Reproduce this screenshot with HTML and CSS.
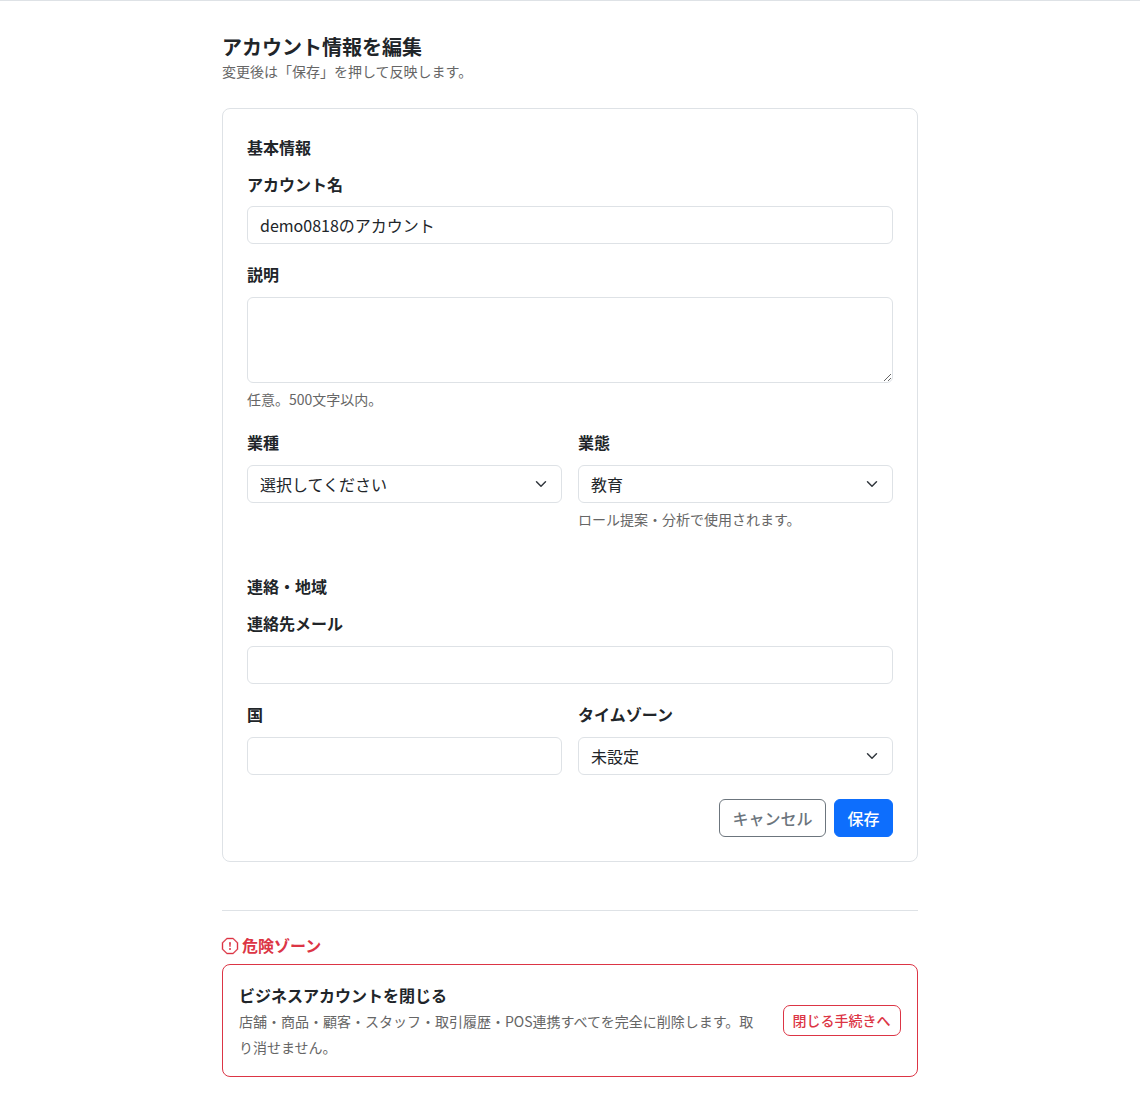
FILE: index.html
```html
<!DOCTYPE html>
<html lang="ja">
<head>
    <meta charset="UTF-8">
    <title>アカウント情報を編集</title>
    <link rel="stylesheet" href="styles.css">
</head>
<body>
    <main class="container">
        <h1 class="page-title">アカウント情報を編集</h1>
        <p class="page-sub">変更後は「保存」を押して反映します。</p>

        <form class="card">
            <h2 class="section-title">基本情報</h2>
            <div class="field">
                <label class="label label-tight" for="name">アカウント名</label>
                <input class="control" id="name" type="text" value="demo0818のアカウント">
            </div>
            <div class="field">
                <label class="label" for="desc">説明</label>
                <textarea class="control area" id="desc" rows="3"></textarea>
                <div class="help help-gap">任意。500文字以内。</div>
            </div>
            <div class="row">
                <div class="field">
                    <label class="label" for="industry">業種</label>
                    <select class="control select" id="industry">
                        <option>選択してください</option>
                    </select>
                </div>
                <div class="field">
                    <label class="label" for="format">業態</label>
                    <select class="control select" id="format">
                        <option>教育</option>
                    </select>
                    <div class="help">ロール提案・分析で使用されます。</div>
                </div>
            </div>

            <h2 class="section-title second">連絡・地域</h2>
            <div class="field">
                <label class="label" for="email">連絡先メール</label>
                <input class="control" id="email" type="email">
            </div>
            <div class="row">
                <div class="field">
                    <label class="label" for="country">国</label>
                    <input class="control" id="country" type="text">
                </div>
                <div class="field">
                    <label class="label" for="tz">タイムゾーン</label>
                    <select class="control select" id="tz">
                        <option>未設定</option>
                    </select>
                </div>
            </div>
            <div class="actions">
                <button class="btn btn-outline" type="button">キャンセル</button>
                <button class="btn btn-primary" type="submit">保存</button>
            </div>
        </form>

        <hr class="divider">

        <h2 class="danger-title">
            <svg class="danger-icon" width="16" height="16" viewBox="0 0 16 16" fill="currentColor" aria-hidden="true">
                <path stroke="currentColor" stroke-width="0.4" d="M4.54.146A.5.5 0 0 1 4.893 0h6.214a.5.5 0 0 1 .353.146l4.394 4.394a.5.5 0 0 1 .146.353v6.214a.5.5 0 0 1-.146.353l-4.394 4.394a.5.5 0 0 1-.353.146H4.893a.5.5 0 0 1-.353-.146L.146 11.46A.5.5 0 0 1 0 11.107V4.893a.5.5 0 0 1 .146-.353L4.54.146zM5.1 1 1 5.1v5.8L5.1 15h5.8l4.1-4.1V5.1L10.9 1H5.1z"/>
                <path d="M7.002 11a1 1 0 1 1 2 0 1 1 0 0 1-2 0zM7.1 4.995a.905.905 0 1 1 1.8 0l-.35 3.507a.552.552 0 0 1-1.1 0L7.1 4.995z"/>
            </svg>
            危険ゾーン
        </h2>
        <section class="danger-card">
            <div class="danger-text">
                <h3 class="danger-head">ビジネスアカウントを閉じる</h3>
                <p class="danger-desc">店舗・商品・顧客・スタッフ・取引履歴・POS連携すべてを完全に削除します。取り消せません。</p>
            </div>
            <a class="danger-btn" href="#">閉じる手続きへ</a>
        </section>
    </main>
</body>
</html>
```

FILE: styles.css
```css
* {
    box-sizing: border-box;
}
body {
    margin: 0;
    border-top: 1px solid #dee2e6;
    background-color: #fff;
    color: #212529;
    font-family: "Noto Sans CJK JP", "Noto Sans", sans-serif;
    font-size: 16px;
    line-height: 1.5;
}
.container {
    width: 696px;
    margin: 0 auto;
    padding: 31px 0 16px;
}
.page-title {
    margin: 0;
    font-size: 20px;
    font-weight: 700;
    line-height: 29px;
}
.page-sub {
    margin: 0 0 26px;
    color: #666;
    font-size: 14px;
    line-height: 21px;
}
.card {
    padding: 26px 24px 24px;
    border: 1px solid #dee2e6;
    border-radius: 8px;
}
.section-title {
    margin: 0 0 13px;
    font-size: 16px;
    font-weight: 700;
    line-height: 24px;
}
.section-title.second {
    margin-top: 44px;
}
.field {
    margin-bottom: 18px;
}
.label {
    display: block;
    margin-bottom: 11px;
    font-weight: 700;
}
.label-tight {
    margin-bottom: 10px;
}
.control {
    display: block;
    width: 100%;
    height: 38px;
    padding: 6px 12px;
    border: 1px solid #dee2e6;
    border-radius: 6px;
    background-color: #fff;
    color: #212529;
    font-family: inherit;
    font-size: 16px;
    line-height: 24px;
}
.area {
    height: 86px;
    resize: vertical;
}
.select {
    padding-right: 36px;
    appearance: none;
    background-image: url("data:image/svg+xml,%3csvg xmlns='http://www.w3.org/2000/svg' viewBox='0 0 16 16'%3e%3cpath fill='none' stroke='%23343a40' stroke-linecap='round' stroke-linejoin='round' stroke-width='2' d='m2 5 6 6 6-6'/%3e%3c/svg%3e");
    background-repeat: no-repeat;
    background-position: right 12px center;
    background-size: 16px 12px;
}
.help {
    margin-top: 6px;
    color: #666;
    font-size: 14px;
    line-height: 21px;
}
.help-gap {
    margin-bottom: 20px;
}
.row {
    display: grid;
    grid-template-columns: 1fr 1fr;
    column-gap: 16px;
}
.row .field {
    margin-bottom: 0;
}
.row + .actions {
    margin-top: 24px;
}
.actions {
    display: flex;
    justify-content: flex-end;
    gap: 8px;
}
.btn {
    height: 38px;
    padding: 6px 12.5px;
    border: 1px solid #6c757d;
    border-radius: 6px;
    background-color: #fff;
    color: #6c757d;
    font-family: inherit;
    font-size: 16px;
    font-weight: 500;
    line-height: 24px;
    cursor: pointer;
}
.btn-primary {
    border-color: #0d6efd;
    background-color: #0d6efd;
    color: #fff;
}
.divider {
    margin: 48px 0 22px;
    border: 0;
    border-top: 1px solid #dee2e6;
}
.danger-title {
    display: flex;
    align-items: center;
    gap: 4px;
    margin: 0 0 7px;
    color: #dc3545;
    font-size: 16px;
    font-weight: 700;
    line-height: 24px;
}
.danger-icon {
    margin-top: 2px;
    overflow: visible;
}
.danger-card {
    display: flex;
    align-items: center;
    gap: 24px;
    padding: 18px 16px 16px;
    border: 1px solid #dc3545;
    border-radius: 8px;
}
.danger-text {
    flex: 1;
}
.danger-head {
    margin: 0 0 1px;
    font-size: 16px;
    font-weight: 700;
    line-height: 24px;
}
.danger-desc {
    margin: 0;
    color: #666;
    font-size: 14px;
    line-height: 26px;
}
.danger-btn {
    flex: none;
    margin-bottom: 2px;
    padding: 4px 9.5px 4px 8.5px;
    border: 1px solid #dc3545;
    border-radius: 7px;
    color: #dc3545;
    font-size: 14px;
    font-weight: 500;
    line-height: 21px;
    text-decoration: none;
}
```
